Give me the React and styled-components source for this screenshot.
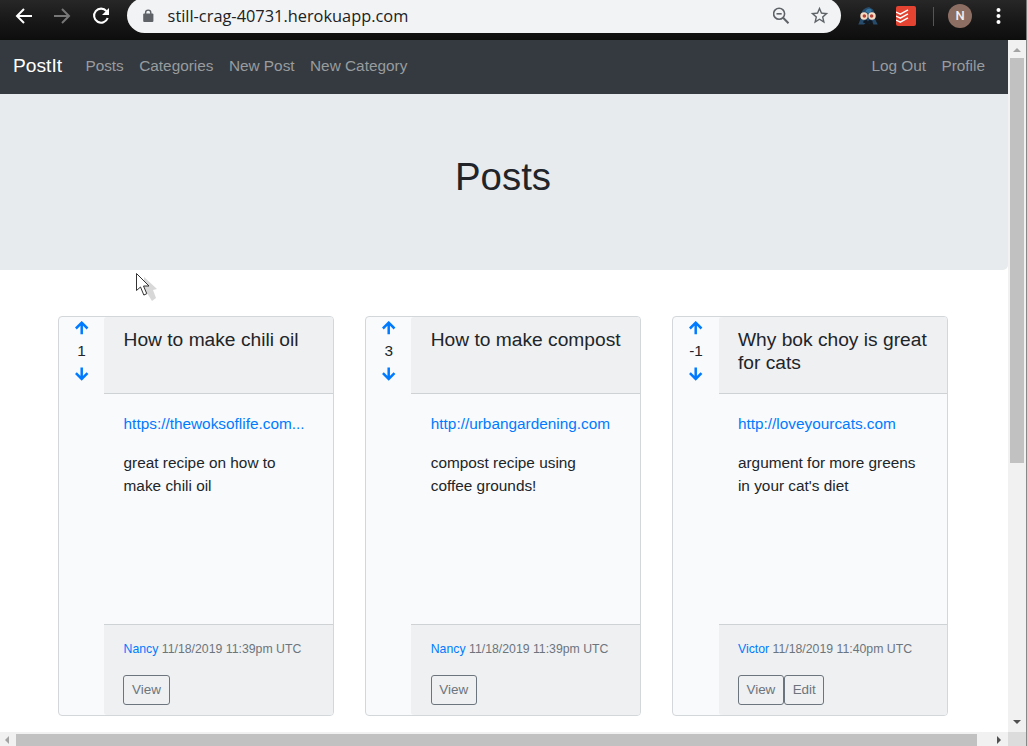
import React from 'react';
import styled, { createGlobalStyle } from 'styled-components';

const Global = createGlobalStyle`
  * { box-sizing: border-box; }
  body { margin: 0; overflow: hidden; background: #fff; font-family: "Liberation Sans", Arial, sans-serif; color: #212529; }
  h1, h2, p { margin: 0; font-weight: 400; }
  svg { display: block; flex: none; }
`;
const Window = styled.div`
  width: 1027px; height: 746px; display: flex; flex-direction: column; overflow: hidden;
`;
const Toolbar = styled.header`
  height: 40px; flex: none; display: flex; align-items: flex-start; overflow: hidden;
  background: linear-gradient(#272727, #171717 55%, #0c0e0c);
  border-right: 1px solid #777;
`;
const NavButtons = styled.div`
  width: 127px; height: 32px; padding-left: 15px; display: flex; align-items: center; gap: 20px;
`;
const Address = styled.div`
  width: 714px; height: 35px; margin-top: -2px; display: flex; align-items: center; padding: 1px 11px 0 15px;
  border-radius: 17.5px; background: #f1f3f4; color: #202124;
`;
const Url = styled.span`
  flex: 1; margin-left: 13.6px; font: 16.38px/32px "Open Sans", "Noto Sans", sans-serif;
  white-space: nowrap;
`;
const AddressIcons = styled.div`display: flex; align-items: center; gap: 18px; padding-bottom: 1px;`;
const Extensions = styled.div`
  height: 32px; display: flex; align-items: center; padding-left: 17px;
`;
const Todoist = styled.svg`margin-left: 18px;`;
const Divider = styled.i`width: 1px; height: 19px; margin: 0 14px 0 17px; background: #555;`;
const Avatar = styled.span`
  width: 24px; height: 24px; margin-right: 24px; border-radius: 50%; background: #8d6e63; color: #f4efed;
  font: 500 13px/24px Roboto, sans-serif; text-align: center;
`;
const Viewport = styled.div`
  flex: 1; min-height: 0; display: grid; grid-template-columns: 1008px 18px; grid-template-rows: 692px 14px;
  border-right: 1px solid #888;
`;
const Page = styled.div`overflow: hidden; background: #fff;`;
const Navbar = styled.nav`
  height: 54px; display: flex; align-items: center; padding: 0 23px 3px 13px; background: #343a40;
`;
const Brand = styled.a`font-size: 19.2px; line-height: 28px; color: #fff; margin-right: 22.4px; width: 50px; white-space: nowrap;`;
const NavLinks = styled.div`display: flex; gap: 15.4px; margin-left: ${p => (p.$end ? 'auto' : 0)};`;
const NavLink = styled.a`font-size: 15.36px; line-height: 23px; color: #999c9f; white-space: nowrap;`;
const Jumbotron = styled.section`
  height: 176px; padding: 60px 2px 0 0; border-radius: 0 0 5px 0; background: #e7ebee; text-align: center;
`;
const PageTitle = styled.h1`font-size: 38.4px; line-height: 46px;`;
const Cards = styled.main`display: flex; gap: 31.2px; padding: 46px 0 0 58px;`;
const Card = styled.article`
  width: 276px; height: 400px; display: flex; border: 1px solid #d4d7da; border-radius: 4px; background: #f8fafc;
`;
const Votes = styled.aside`
  width: 45.2px; flex: none; display: flex; flex-direction: column; align-items: center; padding-top: 4px;
`;
const Count = styled.span`font-size: 15.36px; line-height: 23px; margin: 4px 0 5px;`;
const Content = styled.div`flex: 1; min-width: 0; display: flex; flex-direction: column;`;
const CardHeader = styled.header`
  height: 77px; padding: 11px 15px 0 19.4px; background: #eff0f2; border-bottom: 1px solid #cfd2d5; border-radius: 3px 3px 0 0;
`;
const CardTitle = styled.h2`font-size: 19.2px; line-height: 23px;`;
const CardBody = styled.div`flex: 1; padding: 18px 15px 0 19.4px; font-size: 15.36px; line-height: 23px;`;
const PostLink = styled.a`display: block; margin-bottom: 16px; color: #007bff; white-space: nowrap;`;
const CardFooter = styled.footer`
  height: 91px; padding: 13px 0 0 19.2px; background: #eff0f2; border-top: 1px solid #cfd2d5; border-radius: 0 0 3px 3px;
`;
const Meta = styled.p`font-size: 12.29px; line-height: 23px; color: #6c757d; padding-left: 0.2px; margin-bottom: 14px;`;
const Author = styled.a`color: #007bff;`;
const Actions = styled.div`display: flex;`;
const Button = styled.button`
  height: 30px; padding: 0 7.68px; border: 1px solid #6c757d; border-radius: 3px; background: transparent; color: #6c757d;
  font: 13.44px/20px "Liberation Sans", Arial, sans-serif;
`;
const VerticalBar = styled.div`
  display: flex; flex-direction: column; align-items: center; justify-content: space-between; background: #f1f1f1; padding: 8px 2px 8px 2px;
`;
const VerticalThumb = styled.div`width: 14px; height: 405px; margin-top: 6px; margin-bottom: auto; background: #c1c1c1;`;
const HorizontalBar = styled.div`display: flex; align-items: center; background: #f1f1f1; padding: 2px 7px 0 5px;`;
const HorizontalThumb = styled.div`width: 961px; height: 12px; margin-left: 7px; margin-right: auto; background: #c1c1c1;`;
const Corner = styled.div`background: #dcdcdc;`;

const posts = [
  { votes: 1, title: 'How to make chili oil', link: 'https://thewoksoflife.com...', lines: ['great recipe on how to', 'make chili oil'], author: 'Nancy', date: '11/18/2019 11:39pm UTC', actions: ['View'] },
  { votes: 3, title: 'How to make compost', link: 'http://urbangardening.com', lines: ['compost recipe using', 'coffee grounds!'], author: 'Nancy', date: '11/18/2019 11:39pm UTC', actions: ['View'] },
  { votes: -1, title: 'Why bok choy is great for cats', link: 'http://loveyourcats.com', lines: ['argument for more greens', "in your cat's diet"], author: 'Victor', date: '11/18/2019 11:40pm UTC', actions: ['View', 'Edit'] },
];

const VoteArrow = ({ down }) => (
  <svg width="14" height="14" viewBox="0.3 0 14 14" fill="none" stroke="#007bff" strokeWidth="2.5">
    {down ? <path d="M7 .5v11M1.2 6.2 7 12l5.8-5.8" /> : <path d="M7 13.2v-11M1.2 7.5 7 1.7l5.8 5.8" />}
  </svg>
);
const BackArrow = ({ forward }) => (
  <svg width="18" height="16" viewBox="0 0 18 16" fill="none" stroke={forward ? '#777' : '#fff'} strokeWidth="2">
    <path d={forward ? 'M1 8h14.5M9 1l7 7-7 7' : 'M17 8H2.5M9 1 2 8l7 7'} />
  </svg>
);
const Reload = () => (
  <svg width="20" height="18" viewBox="-1 0 20 18" fill="none" stroke="#fff" strokeWidth="2.1">
    <path d="M14.5 4.2A7 7 0 1 0 15.7 11" /><path d="M17 1v7h-7z" fill="#fff" stroke="none" />
  </svg>
);
const Lock = () => (
  <svg width="12" height="14" viewBox="0 0 12 14">
    <path d="M3.6 6V3.7a2.6 2.6 0 0 1 5.2 0V6" fill="none" stroke="#5f6368" strokeWidth="1.4" />
    <rect x="1.2" y="4.5" width="10.2" height="8.5" rx="1" fill="#5f6368" />
  </svg>
);
const ZoomOut = () => (
  <svg width="18" height="18" viewBox="0.7 0 18 18" fill="none" stroke="#5f6368" strokeWidth="1.6">
    <circle cx="6.8" cy="6.8" r="5.5" /><path d="m10.8 10.8 5.4 5.4" strokeWidth="2" /><path d="M4.2 6.8h5.2" />
  </svg>
);
const Star = () => (
  <svg width="21" height="21" viewBox="0 0 24 24" fill="#5f6368">
    <path d="m22 9.24-7.19-.62L12 2 9.19 8.63 2 9.24l5.46 4.73L5.82 21 12 17.27 18.18 21l-1.63-7.03L22 9.24zM12 15.4l-3.76 2.27 1-4.28-3.32-2.88 4.38-.38L12 6.1l1.71 4.04 4.38.38-3.32 2.88 1 4.28L12 15.4z" />
  </svg>
);
const Mascot = () => (
  <svg width="20" height="18" viewBox="0 0 20 18">
    <path d="M3 8C4 3 6 1 11 0l4 2.5 2.5 5.5-.5 4 2.7 5.5H15.5l-1-2-3.5 1-3-1-2 2H.3L2.5 12z" fill="#284d6c" />
    <path d="M7.5 4.5c1-3 4.5-3.5 6.5-1.5l-2.7 4z" fill="#3478a2" />
    <circle cx="6" cy="9" r="3.7" fill="#f5dcc2" /><circle cx="14" cy="9" r="3.7" fill="#f5dcc2" />
    <circle cx="6.4" cy="9" r="1.8" fill="#b54238" /><circle cx="13.6" cy="9" r="1.8" fill="#b54238" />
    <path d="M5 15.5c1-3 4-3 5-1 1-2 4-2 5 1l-5 1.5z" fill="#101923" />
  </svg>
);
const TodoistIcon = () => (
  <Todoist width="20" height="20" viewBox="0 0 20 20">
    <rect width="20" height="20" rx="2" fill="#e44332" />
    <path d="m0 6 4.3 2.2L12 3.8M0 10l4.3 2.2L12 7.8M0 14l4.3 2.2L12 11.8" fill="none" stroke="#fff" strokeWidth="1.4" />
  </Todoist>
);
const Menu = () => (
  <svg width="6" height="18" viewBox="0 0 6 18" fill="#fff"><circle cx="2.5" cy="3" r="2" /><circle cx="2.5" cy="9" r="2" /><circle cx="2.5" cy="15" r="2" /></svg>
);
const Triangle = ({ d, w, h, color = '#505050' }) => (
  <svg width={w} height={h} viewBox={`0 0 ${w} ${h}`} fill={color}><path d={d} /></svg>
);
const Pointer = styled.svg`position: absolute; left: 135px; top: 272px;`;

const PostCard = ({ post }) => (
  <Card>
    <Votes><VoteArrow /><Count>{post.votes}</Count><VoteArrow down /></Votes>
    <Content>
      <CardHeader><CardTitle>{post.title}</CardTitle></CardHeader>
      <CardBody><PostLink>{post.link}</PostLink>{post.lines.map(line => <p key={line}>{line}</p>)}</CardBody>
      <CardFooter>
        <Meta><Author>{post.author}</Author> {post.date}</Meta>
        <Actions>{post.actions.map(a => <Button key={a}>{a}</Button>)}</Actions>
      </CardFooter>
    </Content>
  </Card>
);

export default function App() {
  return (
    <Window>
      <Global />
      <Toolbar>
        <NavButtons><BackArrow /><BackArrow forward /><Reload /></NavButtons>
        <Address>
          <Lock /><Url>still-crag-40731.herokuapp.com</Url>
          <AddressIcons><ZoomOut /><Star /></AddressIcons>
        </Address>
        <Extensions><Mascot /><TodoistIcon /><Divider /><Avatar>N</Avatar><Menu /></Extensions>
      </Toolbar>
      <Viewport>
        <Page>
          <Navbar>
            <Brand>PostIt</Brand>
            <NavLinks>{['Posts', 'Categories', 'New Post', 'New Category'].map(t => <NavLink key={t}>{t}</NavLink>)}</NavLinks>
            <NavLinks $end>{['Log Out', 'Profile'].map(t => <NavLink key={t}>{t}</NavLink>)}</NavLinks>
          </Navbar>
          <Jumbotron><PageTitle>Posts</PageTitle></Jumbotron>
          <Cards>{posts.map(p => <PostCard key={p.title} post={p} />)}</Cards>
        </Page>
        <VerticalBar>
          <Triangle w={8} h={4} d="M0 4 4 0l4 4z" color="#a3a3a3" /><VerticalThumb /><Triangle w={8} h={4} d="m0 0 4 4 4-4z" />
        </VerticalBar>
        <HorizontalBar>
          <Triangle w={4} h={8} d="M4 0 0 4l4 4z" color="#a3a3a3" /><HorizontalThumb /><Triangle w={4} h={8} d="m0 0 4 4-4 4z" />
        </HorizontalBar>
        <Corner />
      </Viewport>
      <Pointer width="23" height="31" viewBox="0 0 23 31">
        <path d="m9 5 13 12-4 1 3 8-4 3-5-8-3 3z" fill="#b8b8b8" opacity=".55" />
        <path d="M1.5 1.5v17l4-3.5 3.3 8 3-1.3L8.5 14H14z" fill="#fff" stroke="#333" />
      </Pointer>
    </Window>
  );
}
